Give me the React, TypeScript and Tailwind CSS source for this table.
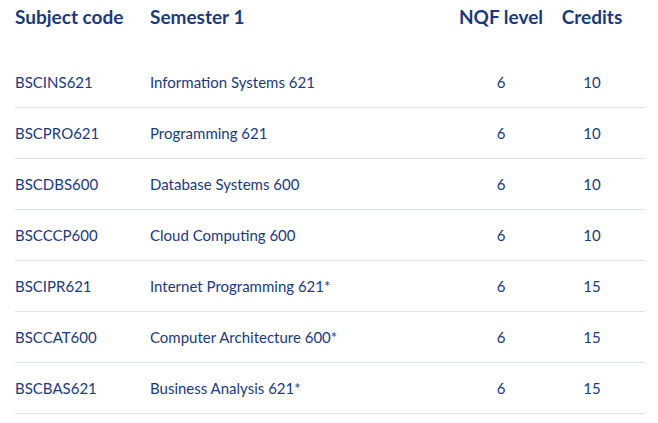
const rows = [
  { code: "BSCINS621", name: "Information Systems 621", nqf: 6, credits: 10 },
  { code: "BSCPRO621", name: "Programming 621", nqf: 6, credits: 10 },
  { code: "BSCDBS600", name: "Database Systems 600", nqf: 6, credits: 10 },
  { code: "BSCCCP600", name: "Cloud Computing 600", nqf: 6, credits: 10 },
  { code: "BSCIPR621", name: "Internet Programming 621*", nqf: 6, credits: 15 },
  { code: "BSCCAT600", name: "Computer Architecture 600*", nqf: 6, credits: 15 },
  { code: "BSCBAS621", name: "Business Analysis 621*", nqf: 6, credits: 15 },
];

export default function App() {
  return (
    <div className="w-[658px] h-[423px] bg-white pl-[15px] pr-[13px] text-[#1b3a7e] font-['Lato',sans-serif]">
      <div className="grid grid-cols-[135px_1fr_90px_92px] pr-[7px] h-[57px] pt-[4px] text-[19px] font-bold leading-[26px]">
        <div>Subject code</div>
        <div>Semester 1</div>
        <div className="text-center">NQF level</div>
        <div className="text-center">Credits</div>
      </div>
      {rows.map(r => (
        <div
          key={r.code}
          className="grid grid-cols-[135px_1fr_90px_92px] pr-[7px] h-[51px] items-center border-b border-[#dde3ec] text-[15px]"
        >
          <div>{r.code}</div>
          <div>{r.name}</div>
          <div className="text-center">{r.nqf}</div>
          <div className="text-center">{r.credits}</div>
        </div>
      ))}
    </div>
  );
}
